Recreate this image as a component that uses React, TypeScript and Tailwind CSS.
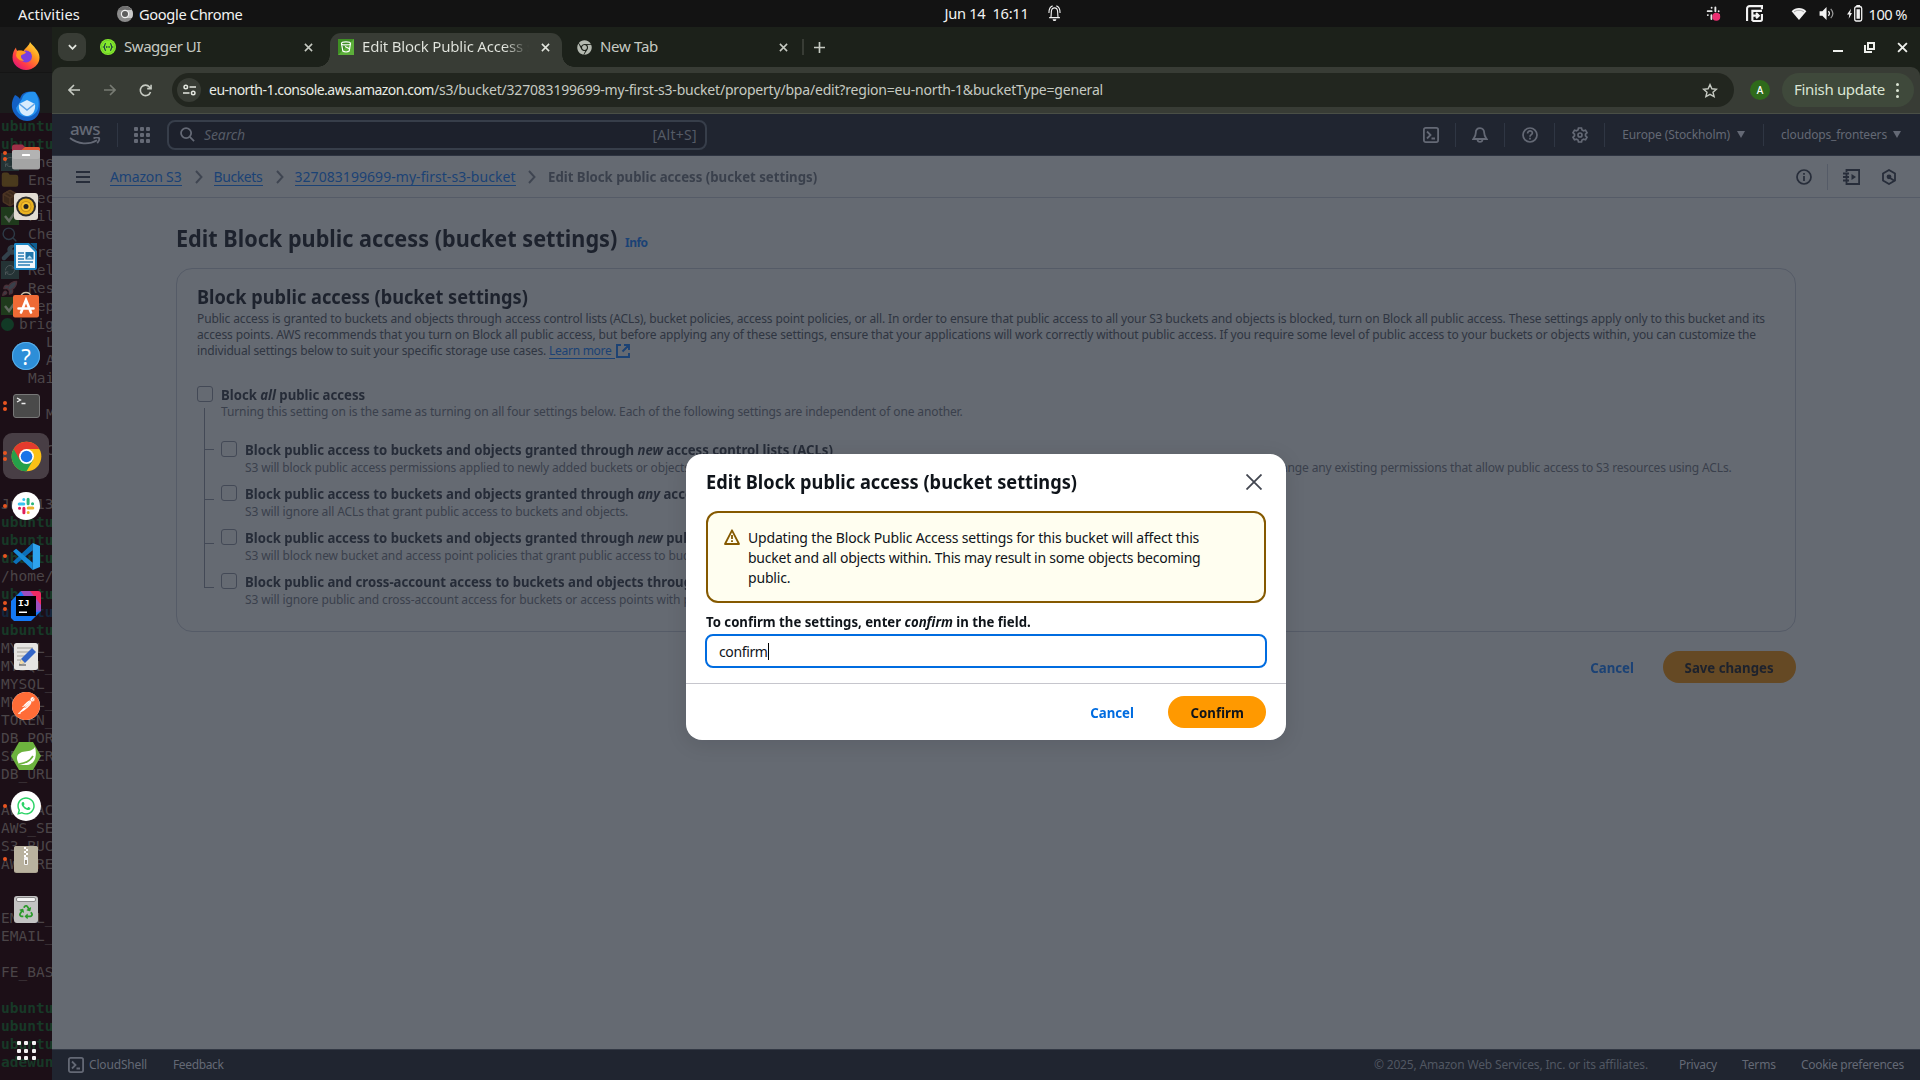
import React from "react";
import { FaChrome, FaRecycle, FaWhatsapp } from "react-icons/fa";
import { SiPostman } from "react-icons/si";
import { Folder, Package, RefreshCw, Rocket, Search, Wrench } from "lucide-react";

type IconProps = { className?: string };

/* ---------- Top bar ---------- */

function ChromeGrey({ className = "" }: IconProps) {
  return (
    <svg viewBox="0 0 16 16" className={className}>
      <circle cx="8" cy="8" r="8" fill="#8b8b8b" />
      <path d="M8 0a8 8 0 0 1 6.9 12H8V8z" fill="#c9c9c9" />
      <path d="M1.1 4A8 8 0 0 1 14.9 4H8z" fill="#6f6f6f" />
      <circle cx="8" cy="8" r="4.2" fill="#f2f2f2" />
      <circle cx="8" cy="8" r="3" fill="#5e5e5e" />
    </svg>
  );
}

function TopBar() {
  return (
    <header className="grid h-[27px] grid-cols-[1fr_auto_1fr] items-center bg-[#131313] text-[14.67px] leading-[26px] text-[#f2f2f2]">
      <div className="flex items-center">
        <span className="ml-[18px] w-[62px] tracking-[0.09px]">Activities</span>
        <ChromeGrey className="ml-[37px] size-4" />
        <span className="ml-[6px] tracking-[-0.36px]">Google Chrome</span>
      </div>
      <div className="flex items-center pl-[85px]">
        <span className="-mt-[2px] whitespace-pre tracking-[-0.29px]">Jun 14  16:11</span>
        <svg viewBox="0 0 14 18" className="ml-[19px] h-[17px] w-[13px]" fill="none" stroke="#f2f2f2" strokeWidth="1.2">
          <path d="M1.2 13.5h11.6M3.2 13c.3-2 .3-4 .4-6 .2-2.6 1.4-4 3.4-4s3.2 1.4 3.4 4c.1 2 .1 4 .4 6M1 8.5c0-4 1.5-7 4-7.7M13 8.5c0-4-1.5-7-4-7.7" />
          <path d="M5 15.2h4a2 2 0 0 1-4 0z" fill="#f2f2f2" stroke="none" />
        </svg>
      </div>
      <div className="flex items-center justify-end pr-[13px]">
        <svg viewBox="0 0 16 16" className="size-[15px]">
          <g stroke="#e8e8e8" strokeWidth="2" strokeLinecap="round">
            <path d="M6 1.8v.1M1.8 5.5h4.2M10 1.5v4.2M13.5 5.6v.1M1.9 9.7h.1M5.8 9.8v4" />
            <path d="M10 9.8h4" />
          </g>
          <circle cx="11" cy="11.5" r="4.2" fill="#ee2f72" />
        </svg>
        <svg viewBox="0 0 16 16" className="ml-[25px] size-[17px]" fill="none" stroke="#f2f2f2" strokeWidth="2">
          <path d="M1 15V3.5A2.5 2.5 0 0 1 3.5 1H15v3" />
          <path d="M6 15V5.5h9M6 15h7.5a1.5 1.5 0 0 0 1.5-1.5V8.5M6 10h6M9.5 7.5L12 10l-2.5 2.5" />
        </svg>
        <svg viewBox="0 0 16 13" className="ml-[28px] h-[12px] w-[16px]">
          <path d="M0 3.5C4.5-1 11.5-1 16 3.5L8 13z" fill="#f2f2f2" />
          <path d="M2.5 4.4C5.5 1.8 10.5 1.8 13.5 4.4" stroke="#8a8a8a" fill="none" strokeWidth=".8" />
        </svg>
        <svg viewBox="0 0 16 14" className="ml-[12px] h-[13px] w-[16px]">
          <path d="M0 4.5h3L7.5 0v14L3 9.5H0z" fill="#f2f2f2" />
          <path d="M9.5 4.5c1.3 1.4 1.3 3.6 0 5" stroke="#f2f2f2" fill="none" strokeWidth="1.3" />
          <path d="M12 2c2.8 3 2.8 7 0 10" stroke="#9a9a9a" fill="none" strokeWidth="1.3" />
        </svg>
        <svg viewBox="0 0 16 16" className="ml-[12px] h-[17px] w-4" preserveAspectRatio="none">
          <path d="M4 3.5L0 9h2.3L1.7 13 5 7.5H3.2z" fill="#f2f2f2" />
          <rect x="7.7" y="1.7" width="7" height="13.3" rx="1.5" fill="none" stroke="#f2f2f2" strokeWidth="1.3" />
          <path d="M9.5 4h3.400v9H9.500zM9.300 0h3.800v1.500H9.300z" fill="#f2f2f2" />
        </svg>
        <span className="ml-[6px] tracking-[-0.55px]">100 %</span>
      </div>
    </header>
  );
}

/* ---------- Background terminal ---------- */

type Line = { text: string; green?: boolean; blue?: boolean; icon?: React.ReactNode; pad?: "sm" | "lg" };

const tealBox = (
  <span className="flex size-[18px] items-center justify-center bg-[#243335]">
    <RefreshCw size={12} color="#4b5557" />
  </span>
);
const check = (
  <svg viewBox="0 0 18 18" className="size-[18px]">
    <rect width="18" height="18" fill="#1f3a1c" />
    <path d="M4 9l4 5 7-10" fill="none" stroke="#61695f" strokeWidth="2.5" />
  </svg>
);

const ub: Line = { text: "ubuntu", green: true };
const blank: Line = { text: "" };
const lines: Line[] = [
  ub, ub,
  { text: "One", icon: tealBox },
  { text: "Ens", icon: <Folder size={18} color="#4a3a1d" fill="#4a3a1d" /> },
  { text: "Dec", icon: <Package size={18} color="#4b3423" fill="#3a281b" /> },
  { text: "Fil", icon: check },
  { text: "Che", icon: <Search size={17} color="#2d3a46" /> },
  { text: "Pre", icon: <Wrench size={17} color="#33424c" fill="#33424c" /> },
  { text: "Rel", icon: tealBox },
  { text: "Res", icon: <Rocket size={17} color="#4a3038" fill="#39404a" /> },
  { text: "Dep", icon: check },
  { text: "brig", icon: <span className="size-[13px] rounded-full bg-[#123a26]" />, pad: "sm" },
  { text: "L", pad: "lg" }, { text: "A", pad: "lg" },
  { text: "Mai", icon: <span /> },
  blank,
  { text: "M", pad: "lg" }, blank,
  { text: "C", pad: "lg" }, blank, blank,
  { text: "Jun 13" }, ub, ub, ub,
  { text: "/home/" }, ub,
  { text: "ubuntu", blue: true }, ub,
  { text: "MYSQL_" }, { text: "MYSQL_" }, { text: "MYSQL_" }, { text: "MYSQL_" },
  { text: "TOKEN_" }, { text: "DB_POR" }, { text: "SERVER" }, { text: "DB_URL" }, blank,
  { text: "AWS_AC" }, { text: "AWS_SE" }, { text: "S3_BUC" }, { text: "AWS_RE" }, blank, blank,
  { text: "EMAIL_" }, { text: "EMAIL_" }, blank,
  { text: "FE_BAS" }, blank,
  ub, ub, ub,
  { text: "adewun", green: true },
];

function TerminalLine({ line }: { line: Line }) {
  const tone = line.green ? "font-bold text-[#173927]" : line.blue ? "font-bold text-[#14273d]" : "text-[#4b4548]";
  const gap = line.pad === "lg" ? "pl-[45px]" : "";
  return (
    <div className={`flex h-[18px] items-center whitespace-pre pl-px ${tone}`}>
      {line.icon && <span className={line.pad === "sm" ? "w-[18px] shrink-0" : "w-[27px] shrink-0"}><span className="flex">{line.icon}</span></span>}
      <span className={gap}>{line.text}</span>
    </div>
  );
}

/* ---------- Dock icons ---------- */

const Firefox = () => (
  <svg viewBox="0 0 28 28" className="size-[28px]">
    <defs>
      <linearGradient id="ff" x1="1" y1="0" x2="0.2" y2="1">
        <stop offset="0" stopColor="#fff24a" /><stop offset=".4" stopColor="#ff9a1f" /><stop offset=".75" stopColor="#ff3b47" /><stop offset="1" stopColor="#d9127c" />
      </linearGradient>
    </defs>
    <path d="M18 0c1.5 2.5 4 4 5.5 6.5C26 9 27.5 12 27.5 15.5A13.5 12.5 0 0 1 .5 15.5C.5 11 2 8 4 5.5c0 1.5.5 2.5 1.5 3.5 2-.5 4 .3 6 0C13 6 17 4 18 0z" fill="url(#ff)" />
    <circle cx="14" cy="14.5" r="6" fill="#7a3fe0" />
    <path d="M5 9c3-1 7-.5 9 1.5-1 2-4 1.5-5 3-.5 2 1 4 3 5-4 1-7-2-8-5z" fill="#ff9a1f" />
  </svg>
);

const Thunderbird = () => (
  <svg viewBox="0 0 30 30" className="size-[30px]">
    <path d="M24 1C16-1 10 2 9 8 8 6 6 5 4 4c-4 6-4 13-1 18 3 5 8 8 13 8 8 0 13-6 13-14 0-5 0-8-2-11-1-2-2-3-3-4z" fill="#1360c4" />
    <path d="M24 1c-7-1-12 2-13 7l-6 9c2 10 16 12 21 3 3-5 2-14-2-19z" fill="#2593f0" />
    <path d="M8 13l8-4 8 4c1 7-3 12-8 12s-9-5-8-12z" fill="#d8ecfd" />
    <path d="M8.5 13l7.5 6 7.5-6" fill="none" stroke="#5da3e8" strokeWidth="1.6" />
  </svg>
);

const Files = () => (
  <svg viewBox="0 0 28 26" className="mt-[2px] h-[26px] w-[28px]">
    <path d="M0 3a2.5 2.5 0 0 1 2.5-2.5h8L13 3h13a2 2 0 0 1 2 2v8H0z" fill="#a03048" />
    <path d="M13 3h13a2 2 0 0 1 2 2v4H6z" fill="#df5a34" />
    <rect y="6" width="28" height="19.5" rx="2.5" fill="#a4a4a4" />
    <rect y="6" width="28" height="9" rx="2.5" fill="#b3b3b3" />
    <rect x="10" y="10" width="8" height="2" rx=".5" fill="#fff" />
  </svg>
);

const Rhythmbox = () => (
  <svg viewBox="0 0 24 27" className="h-[27px] w-[24px]">
    <rect width="24" height="27" rx="3" fill="#e2dcd3" />
    <circle cx="12" cy="13.5" r="10" fill="#2c2c2c" />
    <circle cx="12" cy="13.5" r="8" fill="#e9b220" />
    <circle cx="12" cy="13.5" r="5.5" fill="#c8921c" />
    <circle cx="12" cy="13.5" r="4.5" fill="#f5c02c" />
    <circle cx="12" cy="13.5" r="2.5" fill="#222" />
  </svg>
);

const Writer = () => (
  <svg viewBox="0 0 24 27" className="h-[27px] w-[24px]">
    <path d="M1 0h14l8 8v17a2 2 0 0 1-2 2H2a2 2 0 0 1-2-2V1z" fill="#1c86c4" />
    <path d="M2 2h12l7 7v16H2z" fill="#f2f8fc" />
    <path d="M16 0h7v7z" fill="#0e5f93" />
    <path d="M4 10h6M4 13h6M4 16h6M4 19h15M4 22h12" stroke="#2b7fb5" strokeWidth="1.4" />
    <rect x="11.5" y="9" width="8" height="7.5" fill="#2076ab" />
    <path d="M12.5 15.5l3-3 3 3z" fill="#bde0f4" />
  </svg>
);

const Software = () => (
  <svg viewBox="0 0 28 27" className="-mt-[3px] h-[27px] w-[28px]">
    <path d="M9 6C9 0 19 0 19 6" fill="none" stroke="#cabfa6" strokeWidth="1.6" />
    <rect x="1" y="4" width="26" height="22.5" rx="2" fill="#ee6a35" />
    <path d="M9 21.5L14 9l5 12.5M6.5 17.5h15" fill="none" stroke="#fff" strokeWidth="2.6" strokeLinecap="round" />
  </svg>
);

const Help = () => (
  <span className="flex size-[28px] items-center justify-center rounded-full bg-[#2d8ed8] text-[22px] leading-none text-white shadow-[inset_0_0_0_1px_#5aaee8]">?</span>
);

const Terminal = () => (
  <svg viewBox="0 0 27 24" className="h-[24px] w-[27px]">
    <rect x=".5" y=".5" width="26" height="23" rx="2.5" fill="#4a4a4a" stroke="#787878" />
    <path d="M4 4l3.5 2L4 8M8.5 9.5h4" fill="none" stroke="#eee" strokeWidth="1.3" />
  </svg>
);

const Chrome = () => (
  <svg viewBox="0 0 48 48" className="size-[31px]">
    <circle cx="24" cy="24" r="23" fill="#fbc116" />
    <path d="M24 24L4.08 12.5A23 23 0 0 0 24 47l9.96-17.25z" fill="#25a04a" />
    <path d="M4.08 12.5A23 23 0 0 1 43.92 12.5H24L14 29.75z" fill="#e33b2e" />
    <circle cx="24" cy="24" r="11.5" fill="#fff" />
    <circle cx="24" cy="24" r="9" fill="#1a73e8" />
  </svg>
);

const Slack = () => (
  <svg viewBox="0 0 28 28" className="size-[28px]">
    <circle cx="14" cy="14" r="14" fill="#fff" />
    <g strokeWidth="3" strokeLinecap="round">
      <path d="M7.2 11.9h4.6M11.8 7.5v.1" stroke="#36c5f0" />
      <path d="M16.1 7.2v4.6M20.5 11.8h.1" stroke="#2eb67d" />
      <path d="M16.2 16.1h4.6M16.2 20.5v.1" stroke="#ecb22e" />
      <path d="M11.9 16.2v4.6M7.5 16.2h.1" stroke="#e01e5a" />
    </g>
  </svg>
);

const VSCode = () => (
  <svg viewBox="0 0 26 26" className="size-[27px]">
    <path d="M19 0v7L3 20.5 0 18z" fill="#0b6fb8" />
    <path d="M19 26v-7L3 5.5 0 8z" fill="#178bd8" />
    <path d="M19 0l7 3v20l-7 3z" fill="#2ea3ee" />
  </svg>
);

const IntelliJ = () => (
  <svg viewBox="0 0 30 30" className="size-[30px]">
    <path d="M0 10L10 0h10l10 20-10 10H3L0 27z" fill="#1479f5" />
    <path d="M10 0h17a3 3 0 0 1 3 3v17l-8-3z" fill="#f02b62" />
    <path d="M10 0h9l11 14v6l-8 2z" fill="#8a57d6" opacity=".8" />
    <rect x="5" y="5" width="20" height="20" fill="#000" />
    <text x="7" y="15" fill="#fff" fontSize="9.5" fontWeight="700" fontFamily="Liberation Mono, monospace">IJ</text>
    <rect x="8" y="20.5" width="8" height="1.5" fill="#fff" />
  </svg>
);

const Editor = () => (
  <svg viewBox="0 0 24 27" className="h-[27px] w-[24px]">
    <rect width="24" height="27" rx="2.5" fill="#e6e4e2" />
    <path d="M3 5h16M3 9h14M3 13h11M3 17h6" stroke="#b9b6b3" strokeWidth="1.3" />
    <path d="M5 22l2-6L18 5l4 4-11 11z" fill="#3465c8" />
    <path d="M5 22l2-6 4 4z" fill="#f0d9a8" />
    <path d="M5 22h7" stroke="#444" />
  </svg>
);

const Zip = () => (
  <svg viewBox="0 0 24 27" className="h-[27px] w-[24px]">
    <rect width="24" height="27" rx="2.5" fill="#aca592" />
    <rect width="24" height="26" rx="2.5" fill="#b9b29f" />
    <path d="M10 1h2v2h2v2h-2v2h2v2h-2v2h-2V9h2V7h-2V5h2V3h-2z" fill="#fff" />
    <rect x="10" y="11" width="4" height="8" rx="1" fill="#f5f5f5" />
    <rect x="11" y="14" width="2" height="4" fill="#99917e" />
  </svg>
);

const Trash = () => (
  <span className="flex h-[27px] w-[24px] flex-col items-center rounded-[3px] bg-[#c3c3c3]">
    <span className="mt-[1px] h-[5px] w-[20px] rounded-[2px] border border-[#8a8a8a] bg-[#f4f4f4]" />
    <FaRecycle className="mt-[3px]" size={14} color="#2c9a2c" />
  </span>
);

const Spring = () => (
  <svg viewBox="0 0 30 28" className="h-[28px] w-[30px]">
    <path d="M8 0h14l8 14-8 14H8L0 14z" fill="#6cb33e" />
    <path d="M24 5c2 7 1 17-8 18-3 .3-6 0-8-1C3 14 8 10 14 9.5 19 9 22 8 24 5z" fill="#fff" />
    <path d="M8 22c6-.5 11-3 14-8" fill="none" stroke="#6cb33e" strokeWidth="1.6" />
  </svg>
);

type DockItem = { name: string; icon: React.ReactNode; dots?: number; active?: boolean };

const dock: DockItem[] = [
  { name: "Firefox", icon: <Firefox /> },
  { name: "Thunderbird", icon: <Thunderbird /> },
  { name: "Files", icon: <Files />, dots: 2 },
  { name: "Rhythmbox", icon: <Rhythmbox /> },
  { name: "Writer", icon: <Writer /> },
  { name: "Software", icon: <Software /> },
  { name: "Help", icon: <Help /> },
  { name: "Terminal", icon: <Terminal />, dots: 2 },
  { name: "Chrome", icon: <Chrome />, dots: 2, active: true },
  { name: "Slack", icon: <Slack />, dots: 1 },
  { name: "VS Code", icon: <VSCode />, dots: 1 },
  { name: "IntelliJ", icon: <IntelliJ />, dots: 2 },
  { name: "Editor", icon: <Editor /> },
  { name: "Postman", icon: <span className="flex size-[28px] items-center justify-center rounded-full bg-white"><SiPostman size={28} color="#ff6c37" /></span> },
  { name: "Spring", icon: <Spring /> },
  { name: "WhatsApp", icon: <span className="flex size-[30px] items-center justify-center rounded-full bg-white"><FaWhatsapp size={20} color="#2bd366" /></span>, dots: 1 },
  { name: "Archive", icon: <Zip />, dots: 1 },
  { name: "Trash", icon: <Trash /> },
];

function Dock() {
  return (
    <aside className="relative w-[52px] shrink-0 overflow-hidden bg-[#1c0f17]">
      <div className="h-[46px] border-b border-[#151515] bg-[#1a1a1a]" />
      <div className="h-[40px] bg-[#1b1c1c]" />
      <div className="pt-[4px] font-['DejaVu_Sans_Mono',monospace] text-[14.5px] leading-[18px]">
        {lines.map((l, i) => <TerminalLine key={i} line={l} />)}
      </div>
      <div className="absolute inset-0 flex flex-col pt-[4px]">
        {dock.map((d) => (
          <div key={d.name} className={`relative flex h-[50px] shrink-0 items-center justify-center ${d.name === "Archive" ? "mt-[3px]" : ""}`}>
            <div className={`flex size-[46px] items-center justify-center rounded-[9px] ${d.active ? "bg-[#483e45]" : ""}`}>{d.icon}</div>
            <div className="absolute left-[3px] flex flex-col gap-[2px]">
              {Array.from({ length: d.dots ?? 0 }, (_, i) => <span key={i} className="size-[4px] rounded-full bg-[#e95420]" />)}
            </div>
          </div>
        ))}
        <div className="mt-auto mb-[20px] grid grid-cols-[4px_4px_4px] justify-center gap-[3.5px]">
          {Array.from({ length: 9 }, (_, i) => <span key={i} className="size-[4px] rounded-[1px] bg-[#f5f2f4]" />)}
        </div>
      </div>
    </aside>
  );
}

/* ---------- Browser chrome ---------- */

function Cross({ className = "" }: IconProps) {
  return (
    <svg viewBox="0 0 10 10" className={className} fill="none" stroke="currentColor" strokeWidth="1.7">
      <path d="M1 1l8 8M9 1L1 9" />
    </svg>
  );
}

function TabStrip() {
  return (
    <div className="flex h-10 shrink-0 items-center bg-[#1c211a] text-[15px] text-[#c6cac2]">
      <button className="ml-[6px] flex size-[28px] items-center justify-center rounded-[9px] bg-[#383c35]">
        <svg viewBox="0 0 10 6" className="h-[6px] w-[9px]" fill="none" stroke="#e3e6df" strokeWidth="2"><path d="M1 1l4 4 4-4" /></svg>
      </button>
      <div className="ml-[14px] flex w-[220px] items-center">
        <svg viewBox="0 0 16 16" className="size-4">
          <circle cx="8" cy="8" r="8" fill="#85ea2d" />
          <circle cx="8" cy="8" r="6.6" fill="none" stroke="#6cc828" strokeWidth=".8" />
          <path d="M6 4.500c-2 0-.5 2.800-2.300 3.500C5.500 8.700 4 11.500 6 11.500M10 4.500c2 0 .5 2.800 2.300 3.500-1.800.7-.3 3.500-2.300 3.500" fill="none" stroke="#173647" strokeWidth="1.1" />
          <path d="M6 8h4" stroke="#173647" strokeWidth="1.3" strokeDasharray="1 .6" />
        </svg>
        <span className="-mt-[2px] ml-[8px] tracking-[-0.45px]">Swagger UI</span>
        <Cross className="mr-[7px] ml-auto size-[9px]" />
      </div>
      <div className="relative mt-[6px] ml-[10px] flex h-[34px] w-[232px] items-center rounded-t-[11px] bg-[#383c35] pb-[6px] text-[#e3e6df]">
        <span className="absolute bottom-0 -left-3 size-3 bg-[radial-gradient(circle_at_top_left,transparent_11.5px,#383c35_12px)]" />
        <span className="absolute -right-3 bottom-0 size-3 bg-[radial-gradient(circle_at_top_right,transparent_11.5px,#383c35_12px)]" />
        <svg viewBox="0 0 16 16" className="ml-[8px] size-4">
          <rect width="16" height="16" fill="#3f8f24" /><path d="M0 16L16 0v16z" fill="#5cae3a" />
          <path d="M3.5 4.5l1.3 7.5c1.5 1.3 5 1.3 6.4 0l1.3-7.5" fill="none" stroke="#fff" strokeWidth="1.2" />
          <ellipse cx="8" cy="4.4" rx="4.5" ry="1.5" fill="none" stroke="#fff" strokeWidth="1.1" />
          <path d="M7 7.5l5 2.5" stroke="#fff" strokeWidth="1.1" />
        </svg>
        <span className="-mt-[2px] ml-[8px] w-[167px] overflow-hidden bg-[linear-gradient(90deg,#e3e6df_85%,transparent)] bg-clip-text tracking-[-0.2px] whitespace-nowrap text-transparent">Edit Block Public Access settings</span>
        <Cross className="ml-[12px] size-[9px]" />
      </div>
      <div className="ml-[15px] flex w-[220px] items-center">
        <FaChrome size={15} color="#b4b9b0" />
        <span className="-mt-[2px] ml-[8px] tracking-[-0.29px]">New Tab</span>
        <Cross className="mr-[9px] ml-auto size-[9px]" />
      </div>
      <span className="ml-[5px] h-4 w-[2px] bg-[#383c35]" />
      <svg viewBox="0 0 12 12" className="ml-[10px] size-[11px]" stroke="#c6cac2" strokeWidth="1.8"><path d="M6 0v12M0 6h12" /></svg>
      <div className="mr-[12px] ml-auto flex items-center text-[#eef0ec]">
        <span className="mt-[8px] h-[2px] w-[10px] bg-current" />
        <svg viewBox="0 0 11 11" className="ml-[21px] size-[11px]" fill="none" stroke="currentColor" strokeWidth="2"><path d="M4 1h6v6H4zM1 3v7h7" /></svg>
        <Cross className="ml-[22px] size-[11px]" />
      </div>
    </div>
  );
}

function Toolbar() {
  return (
    <div className="shrink-0 bg-[#1c211a]">
      <div className="flex h-[47px] items-center rounded-t-[9px] border-b border-[#4a4f46] bg-[#383c35] text-[14px] text-[#c6cac2]">
        <svg viewBox="0 0 12 12" className="ml-[16px] size-3" fill="none" stroke="#c6cac2" strokeWidth="1.6"><path d="M12 6H1M6 1L1 6l5 5" /></svg>
        <svg viewBox="0 0 12 12" className="ml-[24px] size-3" fill="none" stroke="#777b73" strokeWidth="1.6"><path d="M0 6h11M6 1l5 5-5 5" /></svg>
        <svg viewBox="0 0 14 14" className="ml-[23px] size-[13px]" fill="none" stroke="#c6cac2" strokeWidth="1.7"><path d="M12.4 8.5A5.6 5.6 0 1 1 11.3 3.2L13 5M13 .8V5H8.8" /></svg>
        <div className="ml-[20px] flex h-[34px] w-[1562px] items-center rounded-full bg-[#22261f]">
          <span className="ml-[5px] flex size-[24px] items-center justify-center rounded-full bg-[#383c35]">
            <svg viewBox="0 0 14 12" className="h-[12px] w-[13px]" fill="none" stroke="#e3e6df" strokeWidth="1.6">
              <circle cx="3" cy="2.8" r="1.9" /><path d="M7 2.8h7M0 9.2h7" /><circle cx="11" cy="9.2" r="1.9" />
            </svg>
          </span>
          <span className="-mt-[2px] ml-[8px] text-[#e8ebe4] tracking-[-0.52px]">eu-north-1.console.aws.amazon.com</span>
          <span className="-mt-[2px] tracking-[-0.195px]">/s3/bucket/327083199699-my-first-s3-bucket/property/bpa/edit?region=eu-north-1&amp;bucketType=general</span>
          <svg viewBox="0 0 16 15" className="mr-[16px] ml-auto h-[15px] w-4" fill="none" stroke="#c6cac2" strokeWidth="1.4">
            <path d="M8 1.6l1.9 4.2 4.6.4-3.5 3 1.1 4.4L8 11.3l-4.1 2.3L5 9.2l-3.5-3 4.6-.4z" />
          </svg>
        </div>
        <span className="ml-[16px] flex size-5 items-center justify-center rounded-full bg-[#2f6a1b] text-[10px] font-medium text-white">A</span>
        <div className="ml-[12px] flex h-[34px] w-[132px] items-center rounded-full bg-[#3f493b] pl-[12px] text-[15px] text-[#dbe5d4]">
          <span className="-mt-[2px] w-[91px] tracking-[-0.32px] whitespace-nowrap">Finish update</span>
          <span className="ml-[11px] flex flex-col gap-[3px]">
            <span className="size-[3px] rounded-full bg-current" /><span className="size-[3px] rounded-full bg-current" /><span className="size-[3px] rounded-full bg-current" />
          </span>
        </div>
      </div>
    </div>
  );
}

/* ---------- AWS console ---------- */

function ShellIcon() {
  return (
    <svg viewBox="0 0 16 16" className="size-4 shrink-0" fill="none" stroke="currentColor" strokeWidth="1.8">
      <rect x=".9" y=".9" width="14.2" height="14.2" rx="1.8" /><path d="M4 4.5L7.5 8 4 11.5M8.5 11.5H12" />
    </svg>
  );
}

const Sep = ({ className = "mx-[16px]" }: IconProps) => <span className={`h-6 w-px bg-[#2f3643] ${className}`} />;

function AwsHeader() {
  return (
    <div className="flex h-[42px] shrink-0 items-center border-b border-[#2d3340] bg-[#202530] text-[#646975]">
      <div className="ml-[17px] flex w-[32px] flex-col items-center">
        <span className="h-[13px] text-[17px] leading-[9px] font-medium tracking-[-0.5px]">aws</span>
        <svg viewBox="0 0 32 8" className="h-[8px] w-[32px]" fill="none" stroke="currentColor" strokeWidth="1.8"><path d="M1 1c8 6.5 19 7 27 2.2M24.5 1.3c2-.8 4.5-1 5.5-.3.6 1.2-.3 3.6-1.8 5.2" /></svg>
      </div>
      <span className="ml-[16px] h-6 w-px bg-[#2f3643]" />
      <div className="ml-[16px] grid grid-cols-3 gap-[2px]">
        {Array.from({ length: 9 }, (_, i) => <span key={i} className="size-[4px] rounded-[1px] bg-current" />)}
      </div>
      <div className="ml-[17px] flex h-[30px] w-[540px] items-center rounded-[8px] border-2 border-[#373e4a] bg-[#1d212c] pl-[11px] text-[14px] text-[#555b66]">
        <svg viewBox="0 0 16 16" className="size-[15px]" fill="none" stroke="#646975" strokeWidth="1.9"><circle cx="6.5" cy="6.5" r="5.4" /><path d="M10.5 10.5L15 15" /></svg>
        <span className="ml-[9px] italic tracking-[-0.12px]">Search</span>
        <span className="mr-[8px] ml-auto tracking-[0.29px]">[Alt+S]</span>
      </div>
      <div className="ml-auto flex items-center text-[12px]">
        <ShellIcon />
        <Sep />
        <svg viewBox="0 0 16 16" className="size-4" fill="none" stroke="currentColor" strokeWidth="1.8"><path d="M8 1.2c-2.8 0-4.2 2-4.2 4.6 0 3-1 4-2.5 6.2h13.4c-1.5-2.2-2.5-3.2-2.5-6.2C12.2 3.2 10.8 1.2 8 1.2zM5.500 12.500c.3 3.200 4.700 3.200 5 0" /></svg>
        <Sep className="mr-[17px] ml-[16px]" />
        <svg viewBox="0 0 16 16" className="size-4" fill="none" stroke="currentColor" strokeWidth="1.7"><circle cx="8" cy="8" r="7" /><path d="M5.6 6.4c0-3.4 4.8-3 4.8-.4 0 1.7-2.4 1.7-2.4 3.7M8 10.8v1.6" /></svg>
        <Sep className="mr-[17px] ml-[16px]" />
        <svg viewBox="0 0 16 16" className="size-4" fill="none" stroke="currentColor" strokeWidth="1.7"><circle cx="8" cy="8" r="2" /><path d="M6.5 1h3l.5 2 1.5.8 2-.6 1.5 2.6L13.5 7.2v1.6L15 10.2l-1.5 2.6-2-.6-1.5.8-.5 2h-3L6 13l-1.5-.8-2 .6L1 10.2l1.5-1.4V7.2L1 5.8l1.5-2.6 2 .6L6 3z" /></svg>
        <Sep className="mr-[17px] ml-[16px]" />
        <span className="tracking-[-0.12px]">Europe (Stockholm)</span>
        <svg viewBox="0 0 8 7" className="ml-[7px] h-[7px] w-2"><path d="M0 0h8L4 7z" fill="currentColor" /></svg>
        <span className="mr-[17px] ml-[18px] h-[22px] w-px bg-[#2f3643]" />
        <span className="tracking-[-0.15px]">cloudops_fronteers</span>
        <svg viewBox="0 0 8 7" className="mr-[19px] ml-[6px] h-[7px] w-2"><path d="M0 0h8L4 7z" fill="currentColor" /></svg>
      </div>
    </div>
  );
}

const Chevron = ({ className = "" }: IconProps) => (
  <svg viewBox="0 0 8 14" className={`h-[14px] w-[8px] ${className}`} fill="none" stroke="#3f4551" strokeWidth="1.9"><path d="M1 1l5.5 6L1 13" /></svg>
);

const link = "border-b border-[#1b4275] leading-[17px] text-[#1b4275]";

function Breadcrumbs() {
  return (
    <div className="flex h-[42px] shrink-0 items-center border-b border-[#555b67] text-[14px]">
      <svg viewBox="0 0 14 12" className="ml-[24px] h-[12px] w-[14px]" stroke="#272d3a" strokeWidth="2"><path d="M0 1h14M0 6h14M0 11h14" /></svg>
      <span className={`ml-[20px] w-[71.5px] tracking-[-0.16px] whitespace-nowrap ${link}`}>Amazon S3</span>
      <Chevron className="ml-[13px]" />
      <span className={`ml-[11px] w-[49px] tracking-[-0.42px] whitespace-nowrap ${link}`}>Buckets</span>
      <Chevron className="ml-[13px]" />
      <span className={`ml-[11px] tracking-[0.05px] ${link}`}>327083199699-my-first-s3-bucket</span>
      <Chevron className="ml-[12px]" />
      <span className="ml-[12px] inline-block origin-left scale-x-[0.943] font-bold text-[#3a404c]">Edit Block public access (bucket settings)</span>
      <div className="mr-[24px] ml-auto flex items-center text-[#272d3a]">
        <svg viewBox="0 0 16 16" className="size-4" fill="none" stroke="currentColor" strokeWidth="1.7"><circle cx="8" cy="8" r="7" /><path d="M8 7v5M8 4v1.7" /></svg>
        <span className="mx-[15px] h-[26px] w-px bg-[#555b67]" />
        <svg viewBox="0 0 17 16" className="h-4 w-[17px]" fill="none" stroke="currentColor" strokeWidth="1.8"><path d="M3.5 3V1h12.6v14H3.5v-2M0 4.5h6M0 8h6M0 11.5h6M3.5 4v9" /><path d="M8.500 5v6l4.500-3z" fill="currentColor" stroke="none" /></svg>
        <svg viewBox="0 0 14 16" className="ml-[22px] h-4 w-[14px]" fill="none" stroke="currentColor" strokeWidth="1.8"><path d="M7 1l6 3.5v7L7 15l-6-3.5v-7z" /><circle cx="7" cy="7.8" r="2.4" fill="currentColor" stroke="none" /><path d="M8 9l4 2.5" /></svg>
      </div>
    </div>
  );
}

const Checkbox = () => <span className="size-4 shrink-0 rounded-[3px] border border-[#434956]" />;

const settings: { label: React.ReactNode; desc: string }[] = [
  {
    label: <>Block public access to buckets and objects granted through <i>new</i> access control lists (ACLs)</>,
    desc: "S3 will block public access permissions applied to newly added buckets or objects, and prevent the creation of new public access ACLs for existing buckets and objects. This setting doesn't change any existing permissions that allow public access to S3 resources using ACLs.",
  },
  {
    label: <>Block public access to buckets and objects granted through <i>any</i> access control lists (ACLs)</>,
    desc: "S3 will ignore all ACLs that grant public access to buckets and objects.",
  },
  {
    label: <>Block public access to buckets and objects granted through <i>new</i> public bucket or access point policies</>,
    desc: "S3 will block new bucket and access point policies that grant public access to buckets and objects.",
  },
  {
    label: <>Block public and cross-account access to buckets and objects through <i>any</i> public bucket or access point policies</>,
    desc: "S3 will ignore public and cross-account access for buckets or access points with policies that grant public access.",
  },
];

const descTracking = ["tracking-[-0.145px]", "tracking-[-0.105px]", "tracking-[-0.115px]", "tracking-[-0.115px]"];
const tickHeights = ["h-[42px]", "h-[50px]", "h-[44px]", "h-[44px]"];

function SettingsCard() {
  return (
    <section className="mt-[15px] h-[364px] rounded-[16px] border border-[#555b67] pt-[16px] pl-[20px] text-[#262c38]">
      <h2 className="text-[20px] leading-[24px] font-bold text-[#1d222d]"><span className="inline-block origin-left scale-x-[0.909]">Block public access (bucket settings)</span></h2>
      <p className="mt-[2px] text-[12px] leading-4 tracking-[-0.134px] whitespace-nowrap text-[#2f3541]">
        Public access is granted to buckets and objects through access control lists (ACLs), bucket policies, access point policies, or all. In order to ensure that public access to all your S3 buckets and objects is blocked, turn on Block all public access. These settings apply only to this bucket and its<br />
        access points. AWS recommends that you turn on Block all public access, but before applying any of these settings, ensure that your applications will work correctly without public access. If you require some level of public access to your buckets or objects within, you can customize the<br />
        individual settings below to suit your specific storage use cases.{" "}
        <a className="inline-flex items-center tracking-[-0.28px] text-[#1b4275]">
          <span className="border-b border-[#1b4275] pr-[3px] leading-[15px]">Learn more</span>
          <svg viewBox="0 0 14 14" className="ml-px size-[14px]" fill="none" stroke="currentColor" strokeWidth="1.9"><path d="M5 1H1v12h12V9M8 1h5v5M13 1L6.5 7.5" /></svg>
        </a>
      </p>
      <div className="mt-[26px] flex gap-[8px]">
        <span className="mt-px"><span className="flex"><Checkbox /></span></span>
        <div>
          <div className="text-[14px] leading-5 font-bold"><span className="inline-block origin-left scale-x-[0.94]">Block <i>all</i> public access</span></div>
          <div className="-mt-px text-[12px] leading-4 tracking-[-0.115px] text-[#3a404c]">Turning this setting on is the same as turning on all four settings below. Each of the following settings are independent of one another.</div>
        </div>
      </div>
      <div className="-mt-[12px] ml-[7px] flex items-start">
        <div className="w-[10px] border-l border-[#434956]">
          {tickHeights.map((h, i) => <div key={i} className={`border-b border-[#434956] ${h}`} />)}
        </div>
        <div className="mt-[33px] ml-[7px] flex flex-col">
          {settings.map((s, i) => (
            <div key={i} className="flex h-11 gap-[8px]">
              <Checkbox />
              <div className="whitespace-nowrap">
                <div className="-mt-px text-[14px] leading-5 font-bold"><span className="inline-block origin-left scale-x-[0.939]">{s.label}</span></div>
                <div className={`text-[12px] leading-4 text-[#3a404c] ${descTracking[i]}`}>{s.desc}</div>
              </div>
            </div>
          ))}
        </div>
      </div>
    </section>
  );
}

function Footer() {
  return (
    <footer className="flex h-[31px] shrink-0 items-center border-t border-[#323844] bg-[#202530] text-[12px] text-[#646975]">
      <span className="ml-[16px]"><ShellIcon /></span>
      <span className="ml-[5px] w-[58px] tracking-[-0.17px]">CloudShell</span>
      <span className="ml-[26px] tracking-[-0.36px]">Feedback</span>
      <span className="ml-auto tracking-[-0.163px] text-[#515762]">© 2025, Amazon Web Services, Inc. or its affiliates.</span>
      <span className="ml-[31px] tracking-[-0.3px]">Privacy</span>
      <span className="ml-[25px] tracking-[-0.1px]">Terms</span>
      <span className="mr-[16px] ml-[25px] tracking-[-0.3px]">Cookie preferences</span>
    </footer>
  );
}

/* ---------- Confirmation dialog ---------- */

function Modal() {
  return (
    <div className="absolute top-[340px] left-[634px] flex h-[286px] w-[600px] flex-col rounded-[16px] bg-white px-5 text-[14px] text-[#0f141a] shadow-[0_4px_20px_1px_rgba(0,7,22,0.1)]">
      <div className="mt-[16px] flex h-[24px] items-center justify-between">
        <h2 className="text-[20px] leading-[24px] font-bold"><span className="inline-block origin-left scale-x-[0.91]">Edit Block public access (bucket settings)</span></h2>
        <svg viewBox="0 0 16 16" className="mr-[4px] size-4" fill="none" stroke="#424650" strokeWidth="1.8"><path d="M.5.5l15 15M15.5.5l-15 15" /></svg>
      </div>
      <div className="mt-[17px] flex h-[92px] rounded-[12px] border-2 border-[#855900] bg-[#fffef0] pt-[15px] pl-[16px]">
        <svg viewBox="0 0 16 16" className="mt-[1px] size-4" fill="none" stroke="#855900" strokeWidth="1.8" strokeLinejoin="round"><path d="M8 1.3L15 15H1z" /><path d="M8 6v4M8 11.3v1.7" /></svg>
        <p className="ml-[8px] leading-5 tracking-[-0.18px] whitespace-nowrap">
          Updating the Block Public Access settings for this bucket will affect this<br />
          <span className="tracking-[-0.24px]">bucket and all objects within. This may result in some objects becoming</span><br />
          public.
        </p>
      </div>
      <label className="mt-[9px] leading-5 font-bold"><span className="inline-block origin-left scale-x-[0.941]">To confirm the settings, enter <i>confirm</i> in the field.</span></label>
      <div className="-mx-px mt-[2px] flex h-[34px] items-center rounded-[8px] border-2 border-[#006ce0] pl-[12px]">
        <span className="tracking-[-0.37px]">confirm</span>
        <span className="h-[17px] w-px bg-black" />
      </div>
      <div className="-mx-5 mt-auto flex h-[57px] items-center justify-end border-t border-[#c6c6cd] pr-5 font-bold">
        <button className="scale-x-[0.945] text-[#006ce0]">Cancel</button>
        <button className="ml-[33px] h-8 w-[98px] rounded-full bg-[#ff9900]"><span className="inline-block scale-x-[0.945]">Confirm</span></button>
      </div>
    </div>
  );
}

export default function App() {
  return (
    <div className="flex h-[1080px] w-[1920px] flex-col overflow-hidden bg-[#131313] font-['Noto_Sans',sans-serif]">
      <TopBar />
      <div className="flex h-[1053px]">
        <Dock />
        <div className="flex min-w-0 flex-1 flex-col">
          <TabStrip />
          <Toolbar />
          <div className="relative flex flex-1 flex-col">
            <AwsHeader />
            <div className="flex flex-1 flex-col bg-[#656a72]">
              <Breadcrumbs />
              <main className="mr-[124px] ml-[124px] pt-[25px]">
                <div className="flex items-baseline">
                  <h1 className="w-[440px] text-[24px] leading-[30px] font-bold whitespace-nowrap text-[#1d222d]"><span className="inline-block origin-left scale-x-[0.902]">Edit Block public access (bucket settings)</span></h1>
                  <span className="ml-[9px] text-[12px] font-bold tracking-[-0.5px] text-[#1b4275]">Info</span>
                </div>
                <SettingsCard />
                <div className="mt-[19px] flex items-center justify-end text-[14px] font-bold">
                  <button className="scale-x-[0.945] text-[#1b4275]">Cancel</button>
                  <button className="ml-[28px] h-8 w-[133px] rounded-full bg-[#654924] text-[#1d222d]"><span className="inline-block scale-x-[0.945]">Save changes</span></button>
                </div>
              </main>
            </div>
            <Footer />
            <Modal />
          </div>
        </div>
      </div>
    </div>
  );
}
